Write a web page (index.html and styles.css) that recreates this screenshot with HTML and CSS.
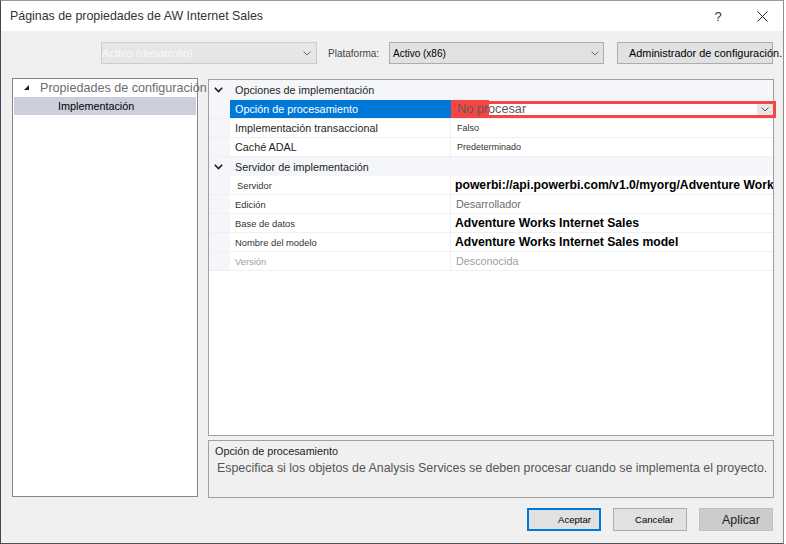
FILE: index.html
```html
<!DOCTYPE html>
<html lang="es">
<head>
<meta charset="utf-8">
<title>Páginas de propiedades de AW Internet Sales</title>
<link rel="stylesheet" href="styles.css">
</head>
<body>
<div class="window">
  <div class="titlebar">
    <span class="title">Páginas de propiedades de AW Internet Sales</span>
    <span class="help">?</span>
    <span class="close"><svg width="11" height="11" viewBox="0 0 11 11"><path d="M0.5 0.5 L10.5 10.5 M10.5 0.5 L0.5 10.5" stroke="#2b2b2b" stroke-width="1" fill="none"/></svg></span>
  </div>
  <div class="content">
    <div class="toolbar">
      <div class="combo combo-dis"><span class="combo-text">Activo (desarrollo)</span><svg class="chevron" width="8" height="5" viewBox="0 0 8 5"><path d="M0.5 0.5 L4 4 L7.5 0.5" stroke="#6a6a6a" fill="none"/></svg></div>
      <span class="label">Plataforma:</span>
      <div class="combo combo-plat"><span class="combo-text">Activo (x86)</span><svg class="chevron" width="8" height="5" viewBox="0 0 8 5"><path d="M0.5 0.5 L4 4 L7.5 0.5" stroke="#6a6a6a" fill="none"/></svg></div>
      <div class="btn-config">Administrador de configuración...</div>
    </div>
    <div class="main">
      <div class="tree">
        <div class="tree-root"><svg class="tri" width="5" height="5" viewBox="0 0 5 5"><polygon points="5,0 5,5 0,5" fill="#1e1e1e"/></svg><span class="tree-root-text">Propiedades de configuración</span></div>
        <div class="tree-sel">Implementación</div>
      </div>
      <div class="right">
        <div class="grid">
          <div class="cat cat1"><span class="chev"><svg width="9" height="6" viewBox="0 0 9 6"><path d="M0.8 0.8 L4.5 4.5 L8.2 0.8" stroke="#1e1e1e" stroke-width="1.6" fill="none"/></svg></span><span class="cat-text">Opciones de implementación</span></div>
          <div class="row sel">
            <div class="m"></div>
            <div class="name">Opción de procesamiento</div>
            <div class="val edit">
              <div class="hl"><div class="hl-fill"></div><div class="dd"><svg width="8" height="5" viewBox="0 0 8 5"><path d="M0.5 0.5 L4 4 L7.5 0.5" stroke="#555" fill="none"/></svg></div></div>
              <span class="np">No procesar</span>
            </div>
          </div>
          <div class="row">
            <div class="m"></div>
            <div class="name">Implementación transaccional</div>
            <div class="val small">Falso</div>
          </div>
          <div class="row">
            <div class="m"></div>
            <div class="name">Caché ADAL</div>
            <div class="val small">Predeterminado</div>
          </div>
          <div class="cat"><span class="chev"><svg width="9" height="6" viewBox="0 0 9 6"><path d="M0.8 0.8 L4.5 4.5 L8.2 0.8" stroke="#1e1e1e" stroke-width="1.6" fill="none"/></svg></span><span class="cat-text">Servidor de implementación</span></div>
          <div class="row">
            <div class="m"></div>
            <div class="name small srv">Servidor</div>
            <div class="val bold">powerbi://api.powerbi.com/v1.0/myorg/Adventure Works Internet Sales</div>
          </div>
          <div class="row">
            <div class="m"></div>
            <div class="name small">Edición</div>
            <div class="val gray">Desarrollador</div>
          </div>
          <div class="row">
            <div class="m"></div>
            <div class="name small">Base de datos</div>
            <div class="val bold">Adventure Works Internet Sales</div>
          </div>
          <div class="row">
            <div class="m"></div>
            <div class="name small">Nombre del modelo</div>
            <div class="val bold">Adventure Works Internet Sales model</div>
          </div>
          <div class="row">
            <div class="m"></div>
            <div class="name small dis">Versión</div>
            <div class="val gray dis">Desconocida</div>
          </div>
        </div>
        <div class="desc">
          <div class="desc-title">Opción de procesamiento</div>
          <div class="desc-text">Especifica si los objetos de Analysis Services se deben procesar cuando se implementa el proyecto.</div>
        </div>
      </div>
    </div>
    <div class="footer">
      <div class="btn btn-ok">Aceptar</div>
      <div class="btn btn-cancel">Cancelar</div>
      <div class="btn btn-apply">Aplicar</div>
    </div>
  </div>
</div>
</body>
</html>
```
FILE: styles.css
```css
* { box-sizing: border-box; }
html, body { margin: 0; padding: 0; background: #ffffff; }
body {
  width: 786px;
  height: 544px;
  overflow: hidden;
  font-family: "Liberation Sans", Arial, sans-serif;
}
.window {
  width: 784px;
  height: 544px;
  border-top: 1px solid #9a9a9a;
  border-left: 1px solid #3d4856;
  border-right: 1px solid #8c8c8c;
  border-bottom: 1px solid #505050;
  background: #f0f0f0;
  display: flex;
  flex-direction: column;
  overflow: hidden;
}
.titlebar {
  height: 30px;
  flex: none;
  background: #ffffff;
  display: flex;
  align-items: center;
  padding-left: 9px;
  padding-right: 11px;
}
.title { flex: 1; font-size: 12.4px; color: #333333; white-space: nowrap; }
.help { width: 20px; text-align: center; font-size: 13px; color: #333333; margin-right: 5px; }
.close { width: 20px; margin-left: 19px; display: flex; justify-content: center; }

.content { flex: 1; display: flex; flex-direction: column; padding-top: 11px; }

.toolbar { display: flex; align-items: center; height: 22px; padding-left: 100px; flex: none; }
.combo {
  height: 22px;
  flex: none;
  display: flex;
  align-items: center;
  justify-content: space-between;
  border: 1px solid #adadad;
}
.combo-dis { width: 216px; background: #e6e6e6; border-color: #cccccc; padding: 0 5px 0 0; }
.combo-dis .combo-text { color: #fafafa; font-size: 11.3px; }
.label { margin-left: 11px; width: 61px; flex: none; font-size: 10px; color: #444444; white-space: nowrap; }
.combo-plat { width: 215px; background: #e1e1e1; padding: 0 4px 0 3px; }
.combo-plat .combo-text { color: #000000; font-size: 10px; }
.btn-config {
  margin-left: 13px;
  width: 156px;
  height: 22px;
  flex: none;
  background: #e1e1e1;
  border: 1px solid #adadad;
  padding-left: 11px;
  font-size: 10.9px;
  color: #000000;
  white-space: nowrap;
  display: flex;
  align-items: center;
}

.main { display: flex; margin-top: 14px; height: 420px; flex: none; }
.tree {
  margin-left: 11px;
  width: 186px;
  height: 419px;
  flex: none;
  border: 1px solid #828790;
  background: #ffffff;
}
.tree-root { height: 18px; display: flex; align-items: center; white-space: nowrap; }
.tri { flex: none; margin-left: 11px; margin-top: -2px; }
.tree-root-text { flex: none; margin-left: 11px; font-size: 12.6px; color: #6d6d6d; }
.tree-sel {
  height: 18px;
  margin: 0 1px;
  background: #cccedb;
  padding-left: 44px;
  font-size: 10.8px;
  color: #000000;
  display: flex;
  align-items: center;
}

.right { margin-left: 10px; margin-top: 1px; width: 566px; flex: none; display: flex; flex-direction: column; }
.grid { height: 357px; border: 1px solid #a0a0a0; background: #ffffff; }
.cat { height: 19px; display: flex; align-items: center; background: #f4f6fa; }
.cat1 { height: 20px; }
.chev { width: 21px; flex: none; padding-left: 5px; display: flex; align-items: center; }
.cat-text { margin-left: 5px; font-size: 10.8px; color: #1e1e1e; white-space: nowrap; }
.row { height: 19px; display: flex; border-bottom: 1px solid #eef0f4; }
.m { width: 21px; background: #f4f6fa; flex: none; }
.name {
  width: 221px;
  flex: none;
  border-right: 1px solid #eef0f4;
  padding-left: 5px;
  font-size: 10.8px;
  color: #1e1e1e;
  display: flex;
  align-items: center;
  white-space: nowrap;
}
.name.small { font-size: 9.4px; color: #333333; }
.name.srv { padding-left: 7px; }
.name.dis { color: #a0a0a0; }
.sel .name { background: #0078d7; color: #ffffff; border-right-color: #0078d7; }
.val {
  flex: 1;
  min-width: 0;
  padding-left: 5px;
  display: flex;
  align-items: center;
  white-space: nowrap;
  overflow: hidden;
  position: relative;
}
.val.small { font-size: 9px; color: #333333; padding-left: 6px; }
.val.bold { font-size: 12.2px; font-weight: bold; color: #000000; padding-left: 4px; }
.val.gray { font-size: 10.8px; color: #6d6d6d; }
.val.dis { color: #a0a0a0; }
.val.edit { overflow: visible; padding-left: 6px; }
.hl {
  position: absolute;
  left: 0;
  top: 1px;
  right: -3px;
  height: 17px;
  border: 3px solid #f64545;
  border-left: none;
}
.hl-fill {
  position: absolute;
  left: 0;
  top: -4px;
  width: 38px;
  height: 18px;
  background: #f64545;
}
.dd {
  position: absolute;
  right: 0;
  top: 0;
  width: 16px;
  height: 11px;
  background: #e6e6e6;
  display: flex;
  align-items: center;
  justify-content: center;
}
.np { position: relative; z-index: 2; font-size: 12.7px; color: #5b5b5b; }

.desc {
  margin-top: 4px;
  height: 58px;
  border: 1px solid #a0a0a0;
  background: #f0f0f0;
  padding: 3px 0 0 6px;
}
.desc-title { font-size: 10.8px; line-height: 14px; color: #1e1e1e; }
.desc-text { font-size: 12.4px; line-height: 16px; margin-top: 2px; padding-left: 2px; color: #555555; white-space: nowrap; }

.footer { margin-top: 10px; display: flex; justify-content: flex-end; gap: 12px; padding-right: 10px; flex: none; }
.btn {
  width: 74px;
  height: 23px;
  flex: none;
  background: #e1e1e1;
  border: 1px solid #adadad;
  display: flex;
  align-items: center;
  color: #000000;
  white-space: nowrap;
}
.btn-ok { border: 2px solid #0078d7; padding-left: 29px; font-size: 9.6px; }
.btn-cancel { padding-left: 21px; font-size: 9.6px; }
.btn-apply { background: #cccccc; border-color: #c0c0c0; padding-left: 22px; font-size: 12.4px; color: #222222; }
```
